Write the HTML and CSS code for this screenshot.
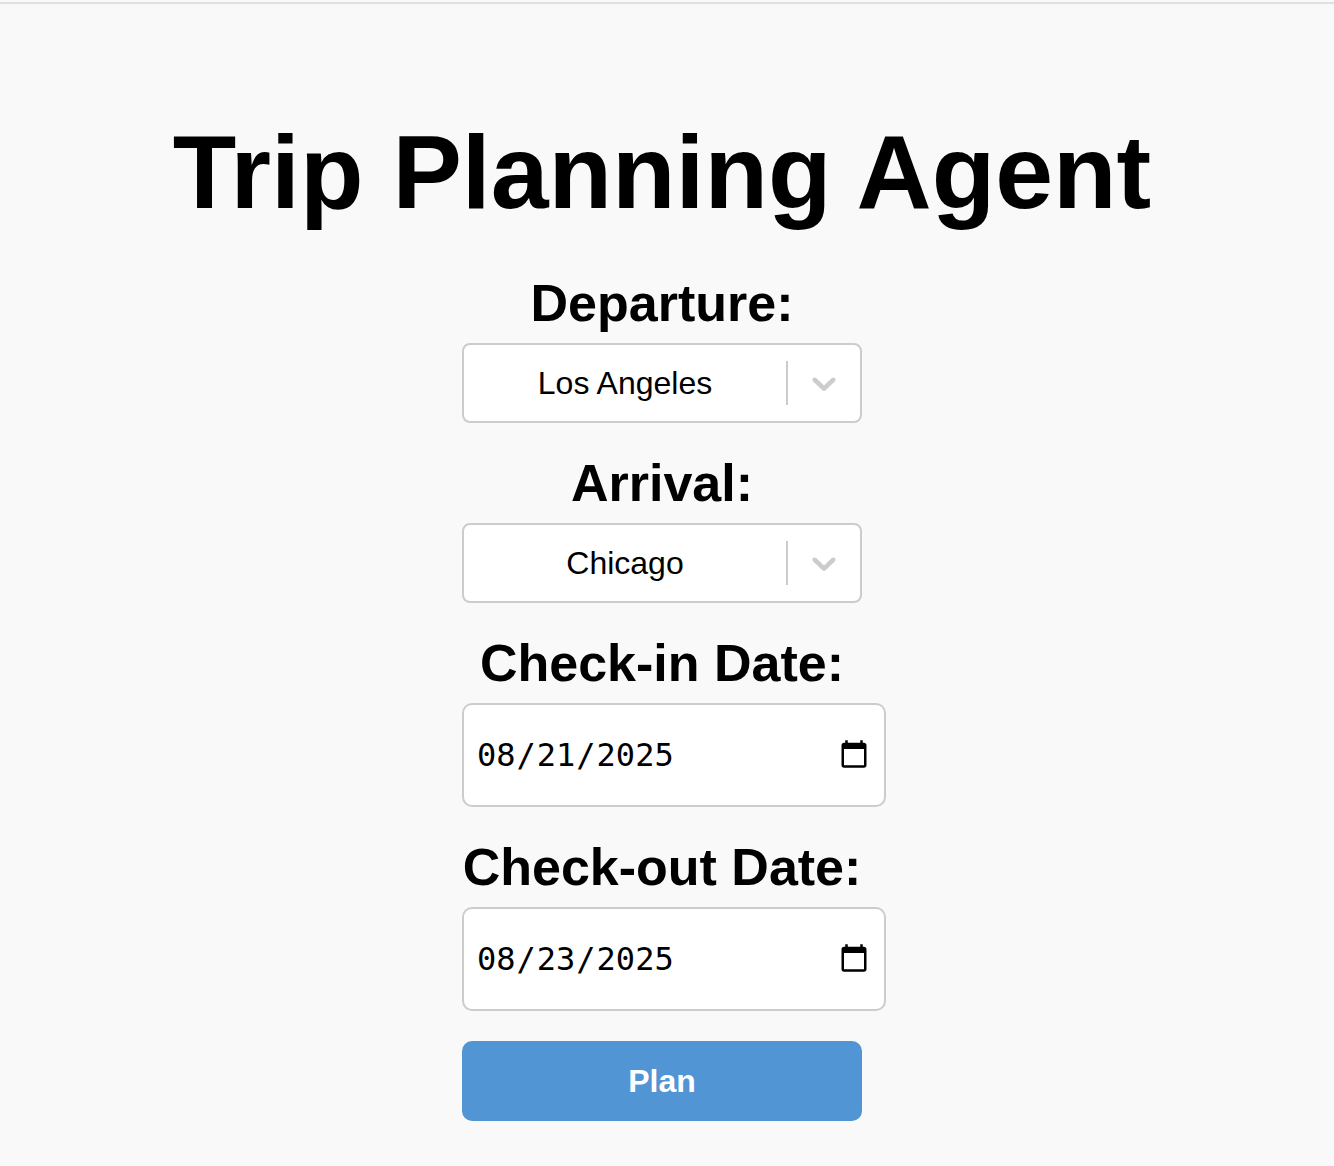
FILE: index.html
```html
<!DOCTYPE html>
<html lang="en">
<head>
<meta charset="utf-8">
<meta name="viewport" content="width=device-width, initial-scale=1">
<title>Trip Planning Agent</title>
<link rel="stylesheet" href="styles.css">
</head>
<body>
<main class="page">
  <h1 class="title">Trip Planning Agent</h1>
  <form class="planner">
    <div class="field">
      <label class="label" for="departure">Departure:</label>
      <div class="picker">
        <select class="picker-select" id="departure"><option>Los Angeles</option><option>Chicago</option></select>
        <span class="picker-arrow"><svg width="40" height="40" viewBox="0 0 20 20" aria-hidden="true"><path d="M4.516 7.548c0.436-0.446 1.043-0.481 1.576 0l3.908 3.747 3.908-3.747c0.533-0.481 1.141-0.446 1.574 0 0.436 0.445 0.408 1.197 0 1.615-0.406 0.418-4.695 4.502-4.695 4.502-0.217 0.223-0.502 0.335-0.787 0.335s-0.57-0.112-0.789-0.335c0 0-4.287-4.084-4.695-4.502s-0.436-1.17 0-1.615z"/></svg></span>
      </div>
    </div>
    <div class="field">
      <label class="label" for="arrival">Arrival:</label>
      <div class="picker">
        <select class="picker-select" id="arrival"><option>Chicago</option><option>Los Angeles</option></select>
        <span class="picker-arrow"><svg width="40" height="40" viewBox="0 0 20 20" aria-hidden="true"><path d="M4.516 7.548c0.436-0.446 1.043-0.481 1.576 0l3.908 3.747 3.908-3.747c0.533-0.481 1.141-0.446 1.574 0 0.436 0.445 0.408 1.197 0 1.615-0.406 0.418-4.695 4.502-4.695 4.502-0.217 0.223-0.502 0.335-0.787 0.335s-0.57-0.112-0.789-0.335c0 0-4.287-4.084-4.695-4.502s-0.436-1.17 0-1.615z"/></svg></span>
      </div>
    </div>
    <div class="field">
      <label class="label" for="check-in">Check-in Date:</label>
      <input class="date" id="check-in" type="date" value="2025-08-21">
    </div>
    <div class="field">
      <label class="label" for="check-out">Check-out Date:</label>
      <input class="date" id="check-out" type="date" value="2025-08-23">
    </div>
    <button class="submit" type="button">Plan</button>
  </form>
</main>
</body>
</html>
```
FILE: styles.css
```css
* {
  box-sizing: border-box;
}

body {
  margin: 0;
  min-height: 100vh;
  padding-top: 2px;
  background: #f9f9f9;
  color: #000;
  font-family: "Liberation Sans", Arial, sans-serif;
}

.page {
  display: flex;
  flex-direction: column;
  align-items: center;
  gap: 40px;
  padding: 108px 10px 40px 0;
  border-top: 2px solid #e0e0e0;
}

.title {
  margin: 0;
  font-size: 104px;
  line-height: 121px;
  text-align: center;
}

.planner {
  display: flex;
  flex-direction: column;
  gap: 30px;
  width: 400px;
}

.field {
  display: flex;
  flex-direction: column;
  gap: 10px;
}

.label {
  font-size: 52px;
  font-weight: bold;
  line-height: 60px;
  text-align: center;
  white-space: nowrap;
}

.picker {
  display: grid;
  grid-template-columns: 1fr 74px;
  align-items: center;
  height: 80px;
  border: 2px solid #ccc;
  border-radius: 8px;
  background: #fff;
}

.picker-select {
  grid-area: 1 / 1 / 2 / 3;
  appearance: none;
  width: 100%;
  height: 100%;
  padding: 0 74px 0 0;
  border: 0;
  background: none;
  color: #000;
  font: 32px "Liberation Sans", Arial, sans-serif;
  text-align: center;
  text-align-last: center;
}

.picker-arrow {
  grid-area: 1 / 2 / 2 / 3;
  display: flex;
  align-items: center;
  justify-content: center;
  height: 44px;
  border-left: 2px solid #ccc;
  pointer-events: none;
}

.picker-arrow svg {
  fill: #ccc;
}

.date {
  width: 424px;
  height: 104px;
  padding: 12px;
  border: 2px solid #ccc;
  border-radius: 10px;
  background: #fff;
  color: #000;
  font: 32px "DejaVu Sans Mono", monospace;
}

.submit {
  height: 80px;
  border: 0;
  border-radius: 10px;
  background: #5295d5;
  color: #fff;
  font: bold 32px "Liberation Sans", Arial, sans-serif;
}
```
